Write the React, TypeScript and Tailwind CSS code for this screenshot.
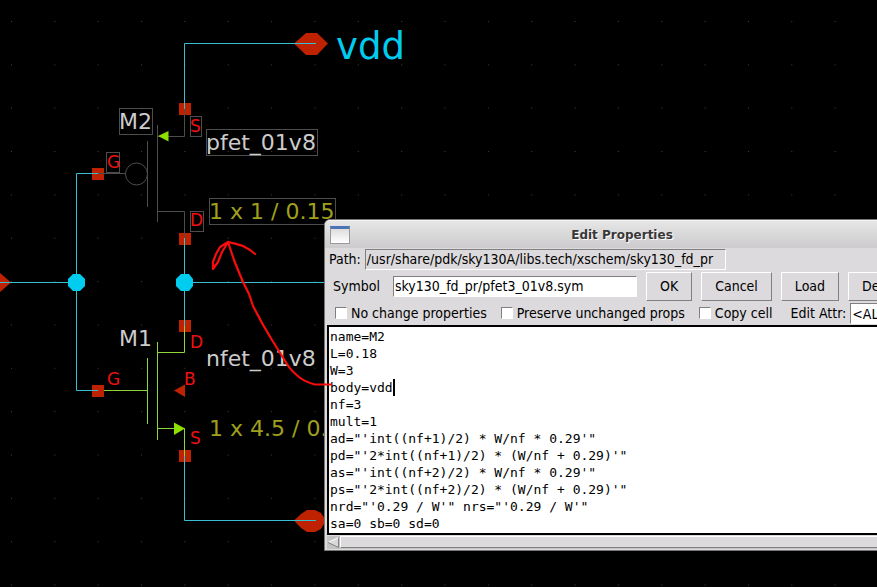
import { useState } from "react";

const ui = "font-['DejaVu_Sans_Condensed','DejaVu_Sans',sans-serif] text-[14px] leading-[20px] text-black";
const raised =
  "border border-t-white border-l-white border-b-[#808080] border-r-[#808080] bg-[#dcdadc]";
const sunken =
  "border border-t-[#808080] border-l-[#808080] border-b-white border-r-white";

const properties = `name=M2
L=0.18
W=3
body=vdd
nf=3
mult=1
ad="'int((nf+1)/2) * W/nf * 0.29'"
pd="'2*int((nf+1)/2) * (W/nf + 0.29)'"
as="'int((nf+2)/2) * W/nf * 0.29'"
ps="'2*int((nf+2)/2) * (W/nf + 0.29)'"
nrd="'0.29 / W'" nrs="'0.29 / W'"
sa=0 sb=0 sd=0`;

function Pin({ x, y }: { x: number; y: number }) {
  return <rect x={x - 6} y={y - 6} width="12" height="12" fill="#bf2200" />;
}

function Schematic() {
  return (
    <svg
      className="absolute inset-0 h-full w-full font-['DejaVu_Sans',sans-serif]"
      role="img"
      aria-label="Inverter schematic"
    >
      <defs>
        <pattern id="grid" x="11" y="21" width="43.35" height="43.35" patternUnits="userSpaceOnUse">
          <rect x="0" y="0" width="1" height="1" fill="#404040" />
        </pattern>
      </defs>
      <rect width="100%" height="100%" fill="url(#grid)" />

      {/* ports */}
      <path d="M294 43.5L306 33H317L328 43.5L317 55H306Z" fill="#bf2200" />
      <path d="M294 520.5L301 514L307 510H315L321 513L326 520.5L321 529L315 532H307L301 528Z" fill="#bf2200" />
      <path d="M0 273L11 282.5L0 292Z" fill="#bf2200" />

      {/* device pins */}
      <Pin x={185} y={109} />
      <Pin x={185} y={239} />
      <Pin x={98} y={174} />
      <Pin x={185} y={326} />
      <Pin x={98} y={391} />
      <Pin x={185} y={456} />
      <path d="M174 390.5L185 384.5V397Z" fill="#bf2200" />

      {/* selected transistor M2 */}
      <g fill="none" stroke="#4d4d4d">
        <path d="M184.500 109V136.500H158M157.500 125V222M147.500 141V207M157.500 211.500H184.500V239M98 173.500H125" />
        <circle cx="136.500" cy="174" r="11" />
        <rect x="119.500" y="108.500" width="33" height="26" />
        <rect x="190.500" y="116.500" width="11" height="20" />
        <rect x="106.500" y="152.500" width="13" height="20" />
        <rect x="190.500" y="211.500" width="13" height="20" />
        <rect x="206.500" y="129.500" width="111" height="26" />
        <rect x="209.500" y="198.500" width="126" height="26" />
      </g>
      <path d="M158 136L168.500 131V141.500Z" fill="#8ee000" />

      {/* transistor M1 */}
      <path
        d="M184.500 326V352.500H157.500M157.500 342V440M147.500 358V424M104 390.500H147.500M157.500 428.500H184.500V456"
        fill="none"
        stroke="#8fd63a"
      />
      <path d="M174 422.500L185 428.500L174 435Z" fill="#8ee000" />

      {/* nets */}
      <path
        d="M316 43.500H184.500V109M98 173.500H76.500V390.500H98M0 282.500H76M184.500 238V326M184 282.500H340M184.500 456V520.500H316"
        fill="none"
        stroke="#38bdd2"
      />
      <path d="M73 274H80L85 279V286L80 291H73L68 286V279Z" fill="#00ccf0" />
      <path d="M181 274H189L193 279V286L189 291H181L176 286V279Z" fill="#00ccf0" />

      <text x="336" y="59" fontSize="37" fill="#00ccf0">vdd</text>
      <g fontSize="22" fill="#cccccc">
        <text x="119" y="129">M2</text>
        <text x="206" y="150">pfet_01v8</text>
        <text x="119" y="346">M1</text>
        <text x="206" y="366">nfet_01v8</text>
      </g>
      <g fontSize="22" fill="#a0a01c">
        <text x="209" y="219">1 x 1 / 0.15</text>
        <text x="209" y="436">1 x 4.5 / 0.15</text>
      </g>
      <g fontSize="17" fill="#ee1111">
        <text x="190" y="132">S</text>
        <text x="107" y="168">G</text>
        <text x="190" y="226">D</text>
        <text x="190" y="348">D</text>
        <text x="107" y="385">G</text>
        <text x="184" y="385">B</text>
        <text x="190" y="444">S</text>
      </g>
    </svg>
  );
}

function Annotation() {
  return (
    <svg className="pointer-events-none absolute inset-0 h-full w-full" aria-hidden="true">
      <path
        d="M331 384.500H315C309 383 304 381 299 377C294 373 290 369 287 364L272 340L262 323L253 306L249 294L243 282L238 270L234 260L230 248L228 242M228 242L220 247L216 254L213 262L213 269L218 262L222 252L228 242C232 243 238 244 243 246L250 250L255 254"
        fill="none"
        stroke="#f80c0c"
        strokeWidth="2.200"
        strokeLinecap="round"
        strokeLinejoin="round"
      />
    </svg>
  );
}

function Check({ label }: { label: string }) {
  return (
    <label className="flex shrink-0 items-center gap-1 whitespace-nowrap">
      <input type="checkbox" className={`h-3 w-3 appearance-none bg-white ${sunken}`} />
      {label}
    </label>
  );
}

function PushButton({ children }: { children: string }) {
  return (
    <button type="button" className={`h-[29px] shrink-0 px-[13px] pb-px ${raised}`}>
      {children}
    </button>
  );
}

function EditProperties() {
  const [text, setText] = useState(properties);
  return (
    <section
      aria-label="Edit Properties"
      className={`absolute left-[324px] top-[219px] w-[596px] overflow-hidden rounded-t-md border border-[#777777] bg-[#dcdadc] pb-px ${ui}`}
    >
      <header className="relative flex h-7 items-center justify-center border-t border-[#f4f4f4] bg-linear-to-b from-[#e6e6e6] to-[#cdcbcd]">
        <span className="absolute left-[5px] top-[5px] h-[18px] w-5 border border-[#999999] border-t-[3px] border-t-[#4a74b4] bg-linear-to-b from-[#dddddd] to-white" />
        <h1 className="font-['DejaVu_Sans',sans-serif] text-[12px] font-bold text-[#383838] [text-shadow:1px_1px_0_#ffffff]">
          Edit Properties
        </h1>
      </header>
      <div className="flex items-start gap-1 pl-1 pt-px">
        <span>Path:</span>
        <output className={`h-[21px] w-[361px] px-px leading-[18px] ${sunken}`}>
          /usr/share/pdk/sky130A/libs.tech/xschem/sky130_fd_pr
        </output>
      </div>
      <div className="flex items-center gap-[9px] pl-2 pt-0.5">
        <label htmlFor="symbol" className="w-[51px] shrink-0 pb-0.5">Symbol</label>
        <input
          id="symbol"
          defaultValue="sky130_fd_pr/pfet3_01v8.sym"
          className={`h-[21px] w-[244px] shrink-0 bg-white px-px pb-0.5 ${sunken}`}
        />
        <PushButton>OK</PushButton>
        <PushButton>Cancel</PushButton>
        <PushButton>Load</PushButton>
        <PushButton>Delete</PushButton>
      </div>
      <div className="flex h-6 items-center gap-3.5 pl-2.5">
        <Check label="No change properties" />
        <Check label="Preserve unchanged props" />
        <Check label="Copy cell" />
        <div className="flex shrink-0 items-center gap-1 pl-1">
          <label htmlFor="attr">Edit Attr:</label>
          <select id="attr" className={`h-[21px] w-16 appearance-none bg-white px-px ${sunken}`}>
            <option>&lt;ALL&gt;</option>
          </select>
        </div>
      </div>
      <div className="relative ml-0.5">
        <textarea
          aria-label="Symbol properties"
          rows={12}
          spellCheck={false}
          value={text}
          onChange={(e) => setText(e.target.value)}
          className="block h-[210px] w-full resize-none overflow-hidden border-2 border-black bg-white p-px font-['DejaVu_Sans_Mono',monospace] text-[13px] leading-[17px] outline-none"
        />
        <span className="absolute left-[66px] top-[54px] h-[17px] w-0.5 bg-black" />
      </div>
      <div className="ml-0.5 mt-px flex h-[13px] bg-[#c3c3c3]">
        <button type="button" aria-label="Scroll left" className="w-[13px] shrink-0">
          <svg viewBox="0 0 13 13" className="h-[13px] w-[13px]">
            <path d="M1 6.500L11.500 1.500V11.500Z" fill="#d9d9d9" />
            <path d="M1 6.500L11.500 1.500" stroke="#ffffff" fill="none" />
            <path d="M1 6.500L11.500 11.500V1.500" stroke="#808080" fill="none" />
          </svg>
        </button>
        <div className={`h-3 flex-1 ${raised}`} />
      </div>
    </section>
  );
}

export default function App() {
  return (
    <main className="relative h-screen w-full overflow-hidden bg-black">
      <Schematic />
      <EditProperties />
      <Annotation />
    </main>
  );
}
